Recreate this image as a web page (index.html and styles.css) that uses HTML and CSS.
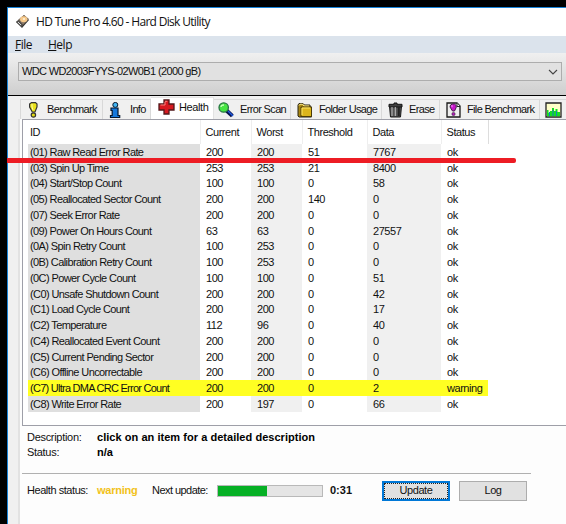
FILE: index.html
```html
<!DOCTYPE html>
<html lang="en">
<head>
<meta charset="utf-8">
<title>HD Tune Pro 4.60 - Hard Disk Utility</title>
<link rel="stylesheet" href="styles.css">
</head>
<body>
<div class="window">
  <header class="titlebar">
    <svg class="app-icon" width="14" height="13" viewBox="0 0 14 13"><path d="M0 7 8 0l5 5-7 8z" fill="#30302e"/><path d="M2 5 8 0l5 4-6 6z" fill="#8b7967"/><ellipse cx="7.7" cy="4.3" rx="3.6" ry="3" fill="#f6c98a"/><circle cx="8" cy="4" r="1" fill="#fff3dc"/><path d="m0 7 3-2 4 5-1 2z" fill="#565350"/><path d="m2 7 3 3" stroke="#ddd"/></svg>
    <span>HD Tune Pro 4.60 - Hard Disk Utility</span>
  </header>
  <nav class="menubar"><span><u>F</u>ile</span><span><u>H</u>elp</span></nav>
  <div class="toolbar">
    <div class="combo"><span>WDC WD2003FYYS-02W0B1 (2000 gB)</span>
      <svg width="10" height="6" viewBox="0 0 10 6"><path d="m1 1 4 4 4-4" fill="none" stroke="#444" stroke-width="1.1"/></svg>
    </div>
  </div>
  <div class="tabs">
    <div class="tab benchmark"><svg width="16" height="16" viewBox="0 0 16 16"><path d="M4.6 2 6.5.6h4L12 2v3l-2 5H7.3L4.6 5z" fill="#e9e21a" stroke="#333" stroke-width="1.2"/><path d="M7 2v3l1 3" stroke="#fffcae" fill="none"/><circle cx="8.4" cy="13" r="2.2" fill="#e0d914" stroke="#333" stroke-width="1.2"/></svg><span>Benchmark</span></div>
    <div class="tab info"><svg width="16" height="16" viewBox="0 0 16 16"><path d="M4 6h7v7.5h1.7v2H3.5v-2h1.7V8.5H4z" fill="#1678dc" stroke="#06162c" stroke-width="1.2"/><circle cx="8.3" cy="2.9" r="2.5" fill="#42b5f3" stroke="#06162c"/></svg><span>Info</span></div>
    <div class="tab health active"><svg width="17" height="16" viewBox="0 0 17 16"><path d="M6 1h5v4h5v6h-5v4H6v-4H1V5h5z" fill="#d71920" stroke="#52181b" stroke-width="1.3"/><path d="M7 2.3h2.3M2.5 6H7V3" stroke="#ff827e" fill="none"/></svg><span>Health</span></div>
    <div class="tab scan"><svg width="17" height="16" viewBox="0 0 17 16"><path d="m8.8 8.7 5.5 5.2" stroke="#06104b" stroke-width="4"/><path d="m10 9 5 5" stroke="#205be0" stroke-width="1.4"/><circle cx="5.7" cy="5.5" r="4.7" fill="#46e542" stroke="#287642" stroke-width="1.3"/><path d="M3 5q0-2 3-2" stroke="#c2ffb6" stroke-width="1.3" fill="none"/></svg><span>Error Scan</span></div>
    <div class="tab folder"><svg width="16" height="16" viewBox="0 0 16 16"><path d="M1 14V3l1-1.5h4L7.5 3H13v2h1.5v10H2z" fill="#a98713" stroke="#292414"/><path d="M2 3.5 3 2.2h2.6L7 4h5.3" stroke="#fff19a" fill="none"/><path d="M4 5h10.5v9.5H4z" fill="#dcb51c" stroke="#4a3b09"/><path d="M5 13V6h8" stroke="#ffe866" fill="none"/></svg><span>Folder Usage</span></div>
    <div class="tab erase"><svg width="15" height="16" viewBox="0 0 15 16"><path d="M1.5 4h12l-1 11h-10z" fill="#545454" stroke="#171717"/><path d="M1 2.3h5V1h3v1.3h5V5H1z" fill="#414141" stroke="#151515"/><path d="M4 5v9M7.3 5v9" stroke="#c0c0c0"/><path d="M10.8 5v9" stroke="#232323" stroke-width="2"/></svg><span>Erase</span></div>
    <div class="tab file"><svg width="15" height="16" viewBox="0 0 15 16"><path d="M1 1h10l3 3v11H1z" fill="#eee" stroke="#181818" stroke-width="1.3"/><path d="M11 1v3.5h3" fill="#fff" stroke="#222"/><path d="m4.5 3 2-1h2l1.7 1.5v2L8.5 9h-2L4 5z" fill="#c715ca" stroke="#42204a"/><path d="M6 3.2v2" stroke="#ffa4ff"/><circle cx="7.5" cy="12" r="1.6" fill="#b018b6" stroke="#42204a" stroke-width=".7"/></svg><span>File Benchmark</span></div>
    <div class="tab monitor"><svg width="17" height="16" viewBox="0 0 17 16"><path d="M1 1h15v14H1z" fill="#ffffc8" stroke="#222" stroke-width="1.3"/><path d="M2 14.3V8h1.5v3H5V9h2V6h2v3h1.5V7h2v3H15v4.3z" fill="#13df22"/><path d="M4.5 14v-4M8 14V8M11.5 14V9" stroke="#167bc0" stroke-width="1"/></svg></div>
  </div>
  <main class="page">
    <section class="listview">
      <table>
        <colgroup><col class="c-id"><col class="c-cur"><col class="c-worst"><col class="c-thr"><col class="c-data"><col class="c-stat"></colgroup>
        <thead><tr><th>ID</th><th>Current</th><th>Worst</th><th>Threshold</th><th>Data</th><th>Status</th></tr></thead>
        <tbody>
          <tr><td>(01) Raw Read Error Rate</td><td>200</td><td>200</td><td>51</td><td>7767</td><td>ok</td></tr>
          <tr><td>(03) Spin Up Time</td><td>253</td><td>253</td><td>21</td><td>8400</td><td>ok</td></tr>
          <tr><td>(04) Start/Stop Count</td><td>100</td><td>100</td><td>0</td><td>58</td><td>ok</td></tr>
          <tr><td>(05) Reallocated Sector Count</td><td>200</td><td>200</td><td>140</td><td>0</td><td>ok</td></tr>
          <tr><td>(07) Seek Error Rate</td><td>200</td><td>200</td><td>0</td><td>0</td><td>ok</td></tr>
          <tr><td>(09) Power On Hours Count</td><td>63</td><td>63</td><td>0</td><td>27557</td><td>ok</td></tr>
          <tr><td>(0A) Spin Retry Count</td><td>100</td><td>253</td><td>0</td><td>0</td><td>ok</td></tr>
          <tr><td>(0B) Calibration Retry Count</td><td>100</td><td>253</td><td>0</td><td>0</td><td>ok</td></tr>
          <tr><td>(0C) Power Cycle Count</td><td>100</td><td>100</td><td>0</td><td>51</td><td>ok</td></tr>
          <tr><td>(C0) Unsafe Shutdown Count</td><td>200</td><td>200</td><td>0</td><td>42</td><td>ok</td></tr>
          <tr><td>(C1) Load Cycle Count</td><td>200</td><td>200</td><td>0</td><td>17</td><td>ok</td></tr>
          <tr><td>(C2) Temperature</td><td>112</td><td>96</td><td>0</td><td>40</td><td>ok</td></tr>
          <tr><td>(C4) Reallocated Event Count</td><td>200</td><td>200</td><td>0</td><td>0</td><td>ok</td></tr>
          <tr><td>(C5) Current Pending Sector</td><td>200</td><td>200</td><td>0</td><td>0</td><td>ok</td></tr>
          <tr><td>(C6) Offline Uncorrectable</td><td>200</td><td>200</td><td>0</td><td>0</td><td>ok</td></tr>
          <tr class="warn"><td>(C7) Ultra DMA CRC Error Count</td><td>200</td><td>200</td><td>0</td><td>2</td><td>warning</td></tr>
          <tr><td>(C8) Write Error Rate</td><td>200</td><td>197</td><td>0</td><td>66</td><td>ok</td></tr>
        </tbody>
      </table>
    </section>
    <dl class="details"><dt>Description:</dt><dd>click on an item for a detailed description</dd><dt>Status:</dt><dd>n/a</dd></dl>
    <footer class="status">
      <span class="label">Health status:</span><b class="amber">warning</b>
      <span class="next">Next update:</span>
      <div class="progress"><div class="fill"></div></div>
      <b class="time">0:31</b>
      <div class="button primary"><span>Update</span></div>
      <div class="button"><span>Log</span></div>
    </footer>
  </main>
  <div class="marker"></div>
</div>
</body>
</html>
```
FILE: styles.css
```css
* { box-sizing: border-box; }
body {
  margin: 0;
  padding: 7px 0 0 7px;
  width: 566px;
  height: 524px;
  overflow: hidden;
  background: #000;
  color: #111;
  font: 11px/15px "Liberation Sans", Arial, sans-serif;
  letter-spacing: -0.45px;
  white-space: nowrap;
}
.window {
  position: relative;
  height: 517px;
  border-top: 1px solid #1883d7;
  border-left: 1px solid #1883d7;
  background: #f0f0f0;
}
.titlebar {
  display: flex;
  align-items: center;
  gap: 6px;
  height: 28px;
  padding-left: 8px;
  background: #fff;
  font: 12px "Open Sans", sans-serif;
  letter-spacing: -0.68px;
}
.titlebar span { margin-bottom: 1px; }
.app-icon { margin-bottom: 2px; }
.menubar {
  display: flex;
  align-items: center;
  gap: 16px;
  height: 17px;
  padding-left: 7px;
  background: #dbe3ec;
  font: 12px/17px "Open Sans", sans-serif;
  letter-spacing: -0.5px;
}
.toolbar {
  height: 42px;
  padding: 9px 4px 0 10px;
  background: linear-gradient(#f0f0f0, #cecece);
}
.combo {
  display: flex;
  align-items: center;
  justify-content: space-between;
  height: 19px;
  padding: 0 3px;
  border: 1px solid #adadad;
  background: #e1e1e1;
  letter-spacing: -0.63px;
}
.tabs {
  display: flex;
  align-items: flex-end;
  height: 24px;
  padding-left: 12px;
  border-top: 1px solid #000;
  letter-spacing: -0.65px;
}
.tab {
  display: flex;
  flex: none;
  align-items: center;
  height: 20px;
  border: 1px solid #d9d9d9;
  border-width: 1px 1px 0 0;
}
.tab svg { flex: none; }
.benchmark { width: 83px; padding-left: 4px; gap: 6px; border-left-width: 1px; }
.info { width: 48px; padding-left: 4px; gap: 7px; }
.health { width: 63px; padding-left: 7px; gap: 4px; letter-spacing: -0.4px; }
.active { height: 22px; padding-bottom: 3px; background: #fff; border-color: #e3e3e3; }
.scan { width: 77px; padding-left: 4px; gap: 5px; }
.folder { width: 91px; padding-left: 6px; gap: 6px; }
.erase { width: 58px; padding-left: 6px; gap: 6px; }
.file { width: 100px; padding-left: 6px; gap: 6px; }
.monitor { width: 30px; padding-left: 5px; }
.page {
  height: 405px;
  margin-left: 10px;
  padding-left: 2px;
  border-left: 2px solid #e2e2e2;
  background: #fdfdfd;
}
.listview {
  height: 307px;
  padding-left: 5px;
  border: 1px solid #9e9fa8;
  border-right: 0;
  background: #fff;
}
table { width: 460px; table-layout: fixed; border-collapse: collapse; }
.c-id { width: 172px; }
.c-cur { width: 51px; }
.c-worst { width: 51px; }
.c-thr { width: 65px; }
.c-data { width: 74px; }
.c-stat { width: 47px; }
th, td { padding: 0; font-weight: normal; text-align: left; line-height: 14px; }
th { height: 24px; padding-left: 5px; border-right: 1px solid #eee; }
th:first-child, td:first-child { padding-left: 2px; }
th:last-child { border-color: #ddd; }
td { height: 15.75px; padding-left: 6px; }
td:first-child { background: #dfdfdf; letter-spacing: -0.6px; }
td:nth-child(3), td:nth-child(5) { background: #f0f0f0; }
.warn td { background: #ff2; }
.warn td:first-child { letter-spacing: -0.74px; }
.details {
  display: grid;
  grid-template-columns: 70px auto;
  grid-auto-rows: 15px;
  width: 509px;
  height: 48px;
  margin: 0;
  padding: 4px 0 0 5px;
  border-bottom: 1px solid #b0b0b0;
}
.details dt { letter-spacing: -0.3px; }
.details dd { margin: 0; color: #000; font-weight: bold; letter-spacing: 0.04px; }
.status { display: flex; align-items: center; height: 33px; padding-left: 5px; }
.label { width: 70px; }
.amber { width: 55px; color: #f2c21b; letter-spacing: -0.25px; }
.next { width: 65px; letter-spacing: -0.55px; }
.progress { width: 106px; height: 12px; border: 1px solid #b9b9b9; background: #e5e5e5; }
.fill { width: 49px; height: 10px; background: #06b025; }
.time { width: 59px; padding-left: 7px; letter-spacing: 0; }
.button {
  display: flex;
  align-items: center;
  justify-content: center;
  width: 68px;
  height: 20px;
  margin-right: 9px;
  border: 1px solid #adadad;
  background: #e1e1e1;
}
.primary { border: 2px solid #0078d7; outline: 1px dotted #222; outline-offset: -3px; }
.marker {
  position: absolute;
  top: 150px;
  left: -1px;
  width: 509px;
  height: 5px;
  border-radius: 0 2px 2px 0;
  background: #ed1c24;
}
```
